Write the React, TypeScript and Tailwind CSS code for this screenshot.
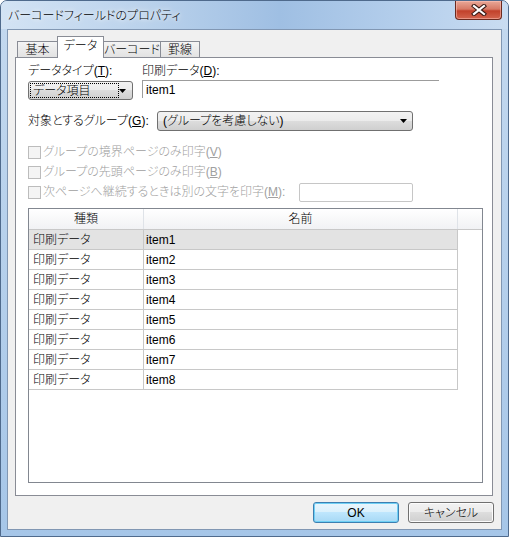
import type { ReactNode } from 'react'

const rows = ['item1', 'item2', 'item3', 'item4', 'item5', 'item6', 'item7', 'item8']

function Caret() {
  return (
    <svg width="7" height="4" viewBox="0 0 7 4" className="shrink-0">
      <path d="M0 0h7L3.5 4z" fill="#000" />
    </svg>
  )
}

function CloseButton() {
  return (
    <div className="mr-[6px] w-[47px] h-[19px] rounded-b-[4px] border border-t-0 border-[#6b2a1f] bg-[linear-gradient(#e9a898,#d77a66_45%,#c2412b_55%,#d3654e)] shadow-[inset_0_0_0_1px_rgba(255,200,190,0.5)] flex items-center justify-center">
      <svg width="16" height="12" viewBox="0 0 16 12">
        <path d="M3 2l10 8M13 2L3 10" stroke="#3a1a14" strokeWidth="4.2" strokeLinecap="square" />
        <path d="M3 2l10 8M13 2L3 10" stroke="#fff" strokeWidth="2.2" strokeLinecap="square" />
      </svg>
    </div>
  )
}

function Tab({ label, selected, width }: { label: string; selected?: boolean; width: string }) {
  if (selected) {
    return (
      <div className={`relative z-10 -ml-px mb-[-1px] h-[22px] ${width} border border-b-0 border-[#898c95] bg-white flex items-center justify-center pb-[3px]`}>
        {label}
      </div>
    )
  }
  return (
    <div className={`-ml-px first:ml-0 h-[16px] ${width} border border-b-0 border-[#898c95] bg-linear-to-b from-[#f4f4f4] to-[#e2e2e2] flex items-center justify-center pt-px`}>
      {label}
    </div>
  )
}

function Check({ children }: { children: ReactNode }) {
  return (
    <div className="flex items-center h-[20px] text-[#a0a0a0]">
      <div className="w-[13px] h-[13px] border border-[#bcbcbc] bg-[#f4f4f4] shrink-0" />
      <span className="ml-[2px] whitespace-nowrap">{children}</span>
    </div>
  )
}

function Button({ children, primary }: { children: ReactNode; primary?: boolean }) {
  return (
    <div
      className={
        primary
          ? 'w-[86px] h-[21px] rounded-[3px] border border-[#3c7fb1] bg-[linear-gradient(#eaf6fd,#d9f0fc_50%,#bee6fd_50%,#a7d9f5)] shadow-[inset_0_0_0_1px_#6fd0f5] flex items-center justify-center'
          : 'w-[86px] h-[21px] rounded-[3px] border border-[#707070] bg-[linear-gradient(#f2f2f2,#ebebeb_50%,#dddddd_50%,#cfcfcf)] shadow-[inset_0_0_0_1px_#fcfcfc] flex items-center justify-center'
      }
    >
      {children}
    </div>
  )
}

export default function App() {
  return (
    <div className="w-[509px] h-[537px] flex flex-col border border-[#4f6a8c] rounded-t-[7px] bg-linear-to-b from-[#c4d9ef] to-[#a6c6e8] overflow-hidden text-[12px] leading-[14px] font-light text-black font-[family-name:'Liberation_Sans','Noto_Sans_CJK_JP',sans-serif] [font-feature-settings:'palt']">
      {/* title bar */}
      <div className="h-[28px] shrink-0 flex items-start justify-between bg-[linear-gradient(90deg,#d3e3f4,#b9d1eb_30%,#9fbfe3_55%,#b5cfec_80%,#c9dcf1)]">
        <div className="pl-[7px] pt-[8px] [text-shadow:0_0_8px_#fff,0_0_4px_#fff]">バーコードフィールドのプロパティ</div>
        <CloseButton />
      </div>

      {/* client */}
      <div className="flex-1 mx-[6px] mb-[6px] border border-[#8197b3] bg-[#f0f0f0] flex flex-col pt-[6px] pb-[6px]">
        <div className="flex items-end h-[21px] pl-[9px]">
          <Tab label="基本" width="w-[41px]" />
          <Tab label="データ" width="w-[47px]" selected />
          <Tab label="バーコード" width="w-[58px]" />
          <Tab label="罫線" width="w-[40px]" />
        </div>

        <div className="ml-[7px] mr-[8px] h-[439px] border border-[#898c95] bg-white pl-[12px] pt-[6px] flex flex-col">
          {/* data type / print data */}
          <div className="flex">
            <div className="w-[114px] flex flex-col">
              <div className="h-[14px] whitespace-nowrap">
                データタイプ(<u>T</u>):
              </div>
              <div className="mt-[3px] w-[105px] h-[19px] rounded-[3px] border border-[#707070] bg-[linear-gradient(#f2f2f2,#ebebeb_50%,#dddddd_50%,#cfcfcf)] flex items-center pl-[1px] pr-[6px]">
                <div className="w-[89px] h-[15px] border border-dotted border-black flex items-center pl-[2px]">データ項目</div>
                <div className="flex-1" />
                <Caret />
              </div>
            </div>
            <div className="w-[297px] flex flex-col">
              <div className="h-[14px] whitespace-nowrap">
                印刷データ(<u>D</u>):
              </div>
              <div className="mt-[2px] h-[18px] border-t border-l border-[#9c9c9c] pl-[3px] pt-[2px]">item1</div>
            </div>
          </div>

          {/* group */}
          <div className="mt-[11px] flex items-center h-[20px]">
            <div className="w-[129px] whitespace-nowrap">
              対象とするグループ(<u>G</u>):
            </div>
            <div className="w-[256px] h-[20px] rounded-[3px] border border-[#707070] bg-[linear-gradient(#f2f2f2,#ebebeb_50%,#dddddd_50%,#cfcfcf)] flex items-center pl-[5px] pr-[5px]">
              <span className="flex-1">(グループを考慮しない)</span>
              <Caret />
            </div>
          </div>

          {/* options */}
          <div className="mt-[11px] flex flex-col">
            <Check>
              グループの境界ページのみ印字(<u>V</u>)
            </Check>
            <Check>
              グループの先頭ページのみ印字(<u>B</u>)
            </Check>
            <div className="flex items-center h-[20px]">
              <div className="w-[271px]">
                <Check>
                  次ページへ継続するときは別の文字を印字(<u>M</u>):
                </Check>
              </div>
              <div className="w-[114px] h-[19px] rounded-[2px] border border-[#c6c6c6] bg-white" />
            </div>
          </div>

          {/* list */}
          <div className="mt-[6px] w-[455px] h-[275px] border border-[#828790] bg-white flex flex-col">
            <div className="flex h-[21px] border-b border-[#c8c8c8] bg-linear-to-b from-white to-[#f1f2f4]">
              <div className="w-[115px] border-r border-[#dfe3e8] flex items-center justify-center">種類</div>
              <div className="w-[314px] border-r border-[#dfe3e8] flex items-center justify-center">名前</div>
              <div className="flex-1" />
            </div>
            {rows.map((item, i) => (
              <div
                key={item}
                className={`flex h-[20px] w-[429px] border-b border-[#c8c8c8] ${i === 0 ? 'bg-[#e3e3e3]' : ''}`}
              >
                <div className="w-[115px] border-r border-[#c8c8c8] flex items-center pl-[4px]">印刷データ</div>
                <div className="w-[314px] border-r border-[#c8c8c8] flex items-center pl-[2px]">{item}</div>
              </div>
            ))}
          </div>
        </div>

        <div className="mt-[6px] flex justify-end gap-[9px] pr-[7px]">
          <Button primary>OK</Button>
          <Button>キャンセル</Button>
        </div>
      </div>
    </div>
  )
}
